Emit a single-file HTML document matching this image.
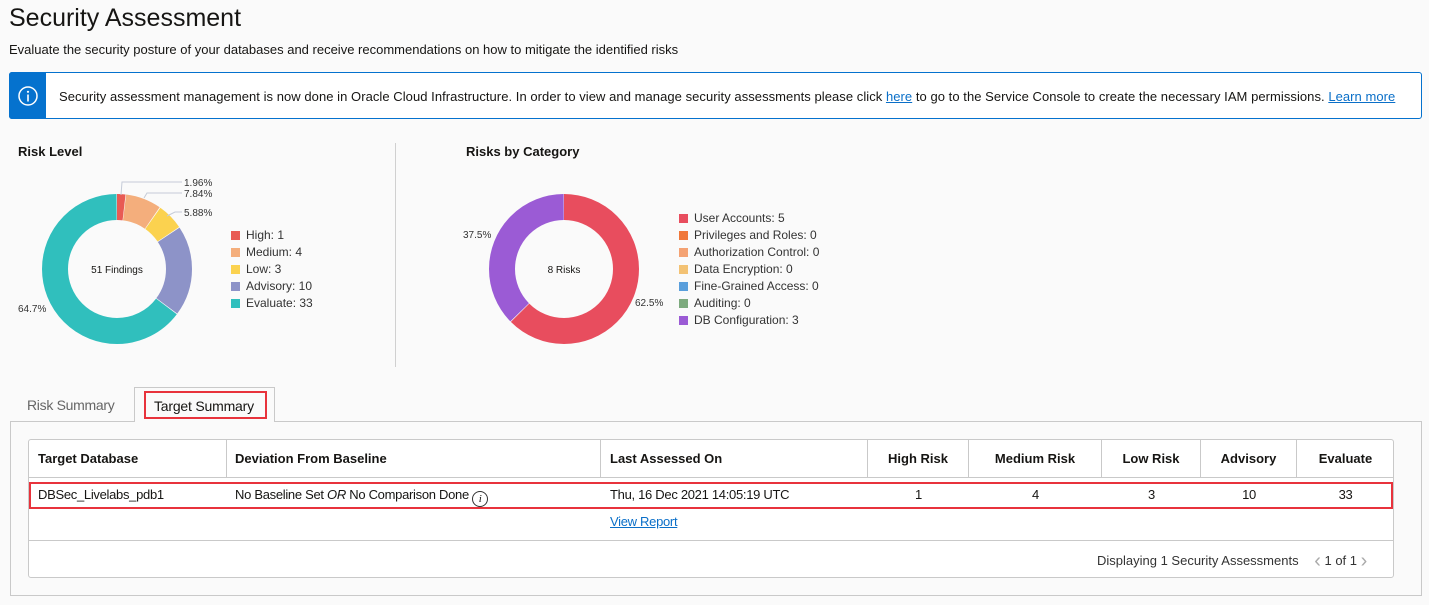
<!DOCTYPE html>
<html><head><meta charset="utf-8"><style>
*{box-sizing:border-box;margin:0;padding:0}
body{width:1429px;height:605px;background:#fafafa;font-family:"Liberation Sans",Arial,sans-serif;color:#161513;position:relative;overflow:hidden}
.a{position:absolute;white-space:nowrap}
a{color:#0a6fc8}
.tbl{position:absolute;left:28px;top:439px;width:1366px;height:139px;border:1px solid #c9c9c9;border-radius:3px;background:#fff}
.th{position:absolute;top:0;height:38px;line-height:37px;font-size:13px;font-weight:bold;border-right:1px solid #c9c9c9}
.td{position:absolute;top:47px;font-size:13px;letter-spacing:-0.3px}
</style></head><body>
<div class="a" style="left:9px;top:4px;font-size:25px;color:#161513">Security Assessment</div>
<div class="a" style="left:9px;top:42px;font-size:13px">Evaluate the security posture of your databases and receive recommendations on how to mitigate the identified risks</div>
<div class="a" style="left:9px;top:72px;width:1413px;height:47px;border:1px solid #0572ce;border-radius:3px;background:#fff"></div>
<div class="a" style="left:9px;top:72px;width:37px;height:47px;background:#0572ce;border-radius:3px 0 0 3px"></div>
<svg class="a" style="left:17px;top:85px" width="22" height="22" viewBox="0 0 22 22"><circle cx="11" cy="11" r="9" fill="none" stroke="#fff" stroke-width="1.5"/><rect x="10.2" y="9.5" width="1.6" height="7" fill="#fff"/><circle cx="11" cy="6.8" r="1.1" fill="#fff"/></svg>
<div class="a" style="left:59px;top:89px;font-size:13px;letter-spacing:0.05px">Security assessment management is now done in Oracle Cloud Infrastructure. In order to view and manage security assessments please click <a href="#">here</a> to go to the Service Console to create the necessary IAM permissions. <a href="#">Learn more</a></div>

<div class="a" style="left:18px;top:144px;font-size:13px;font-weight:bold">Risk Level</div>
<div class="a" style="left:466px;top:144px;font-size:13px;font-weight:bold">Risks by Category</div>
<div class="a" style="left:395px;top:143px;width:1px;height:224px;background:#d0d0d0"></div>

<svg class="a" style="left:0;top:160px" width="400" height="200">
<g transform="rotate(-90 117 109)" fill="none" stroke-width="26">
<circle cx="117" cy="109" r="62" stroke="#e85b54" stroke-dasharray="7.1 400" stroke-dashoffset="0"/>
<circle cx="117" cy="109" r="62" stroke="#f4ae7c" stroke-dasharray="29.9 400" stroke-dashoffset="-7.6"/>
<circle cx="117" cy="109" r="62" stroke="#fbd24f" stroke-dasharray="22.3 400" stroke-dashoffset="-38.2"/>
<circle cx="117" cy="109" r="62" stroke="#8d93c8" stroke-dasharray="75.8 400" stroke-dashoffset="-61.1"/>
<circle cx="117" cy="109" r="62" stroke="#30bfbd" stroke-dasharray="251.5 400" stroke-dashoffset="-137.5"/>
</g>
<polyline points="121,35 122,22 182,22" fill="none" stroke="#c5cbd8"/>
<polyline points="144,38 147,33 182,33" fill="none" stroke="#c5cbd8"/>
<polyline points="167,56 175,52 182,52" fill="none" stroke="#c5cbd8"/>
<text x="184" y="26" font-size="10" fill="#333">1.96%</text>
<text x="184" y="37" font-size="10" fill="#333">7.84%</text>
<text x="184" y="56" font-size="10" fill="#333">5.88%</text>
<text x="18" y="152" font-size="10" fill="#333">64.7%</text>
<text x="117" y="113" font-size="10" fill="#161513" text-anchor="middle">51 Findings</text>
</svg>
<svg class="a" style="left:228px;top:228px" width="100" height="90" font-size="12" fill="#333">
<rect x="3" y="3" width="9" height="9" fill="#e85b54"/><text x="18" y="11">High: 1</text>
<rect x="3" y="20" width="9" height="9" fill="#f4ae7c"/><text x="18" y="28">Medium: 4</text>
<rect x="3" y="37" width="9" height="9" fill="#fbd24f"/><text x="18" y="45">Low: 3</text>
<rect x="3" y="54" width="9" height="9" fill="#8d93c8"/><text x="18" y="62">Advisory: 10</text>
<rect x="3" y="71" width="9" height="9" fill="#30bfbd"/><text x="18" y="79">Evaluate: 33</text>
</svg>

<svg class="a" style="left:440px;top:160px" width="230" height="200">
<g transform="rotate(-90 124 109)" fill="none" stroke-width="26">
<circle cx="124" cy="109" r="62" stroke="#e84d5e" stroke-dasharray="243.5 400"/>
<circle cx="124" cy="109" r="62" stroke="#9b5bd5" stroke-dasharray="145 400" stroke-dashoffset="-244.1"/>
</g>
<text x="124" y="113" font-size="10" fill="#161513" text-anchor="middle">8 Risks</text>
<text x="23" y="78" font-size="10" fill="#333">37.5%</text>
<text x="195" y="146" font-size="10" fill="#333">62.5%</text>
</svg>
<svg class="a" style="left:676px;top:211px" width="160" height="120" font-size="12" fill="#333">
<rect x="3" y="3" width="9" height="9" fill="#e84d5e"/><text x="18" y="11">User Accounts: 5</text>
<rect x="3" y="20" width="9" height="9" fill="#f0773a"/><text x="18" y="28">Privileges and Roles: 0</text>
<rect x="3" y="37" width="9" height="9" fill="#f4a273"/><text x="18" y="45">Authorization Control: 0</text>
<rect x="3" y="54" width="9" height="9" fill="#f3c274"/><text x="18" y="62">Data Encryption: 0</text>
<rect x="3" y="71" width="9" height="9" fill="#5a9fdc"/><text x="18" y="79">Fine-Grained Access: 0</text>
<rect x="3" y="88" width="9" height="9" fill="#7daa7e"/><text x="18" y="96">Auditing: 0</text>
<rect x="3" y="105" width="9" height="9" fill="#9b5bd5"/><text x="18" y="113">DB Configuration: 3</text>
</svg>

<div class="a" style="left:10px;top:421px;width:1412px;height:175px;border:1px solid #c9c9c9;background:#fafafa"></div>
<div class="a" style="left:27px;top:397px;font-size:14px;color:#666;letter-spacing:-0.3px">Risk Summary</div>
<div class="a" style="left:134px;top:387px;width:141px;height:35px;border:1px solid #c9c9c9;border-bottom:none;background:#fafafa"></div>
<div class="a" style="left:144px;top:391px;width:123px;height:28px;border:2px solid #e8333c;font-size:14px;padding:5px 0 0 8px;letter-spacing:-0.2px">Target Summary</div>

<div class="tbl">
<div style="position:absolute;left:0;right:0;top:37px;border-top:1px solid #c9c9c9"></div>
<div style="position:absolute;left:0;right:0;top:100px;border-top:1px solid #c9c9c9"></div>
<div class="th" style="left:0;width:198px;padding-left:9px">Target Database</div>
<div class="th" style="left:198px;width:374px;padding-left:8px">Deviation From Baseline</div>
<div class="th" style="left:572px;width:267px;padding-left:9px">Last Assessed On</div>
<div class="th" style="left:839px;width:101px;text-align:center">High Risk</div>
<div class="th" style="left:940px;width:133px;text-align:center">Medium Risk</div>
<div class="th" style="left:1073px;width:99px;text-align:center">Low Risk</div>
<div class="th" style="left:1172px;width:96px;text-align:center">Advisory</div>
<div class="th" style="left:1268px;width:97px;text-align:center;border-right:none">Evaluate</div>
<div class="td" style="left:9px">DBSec_Livelabs_pdb1</div>
<div class="td" style="left:206px">No Baseline Set <i>OR</i> No Comparison Done <span style="display:inline-block;width:16px;height:16px;border:1px solid #333;border-radius:50%;font-size:11px;text-align:center;line-height:14px;font-style:italic;font-family:'Liberation Serif',serif;vertical-align:-3px">i</span></div>
<div class="td" style="left:581px">Thu, 16 Dec 2021 14:05:19 UTC</div>
<div class="td" style="left:839px;width:101px;text-align:center">1</div>
<div class="td" style="left:940px;width:133px;text-align:center">4</div>
<div class="td" style="left:1073px;width:99px;text-align:center">3</div>
<div class="td" style="left:1172px;width:96px;text-align:center">10</div>
<div class="td" style="left:1268px;width:97px;text-align:center">33</div>
<div class="td" style="left:581px;top:74px"><a href="#">View Report</a></div>
<div class="td" style="left:1068px;top:110px;color:#333;letter-spacing:0">Displaying 1 Security Assessments <span style="color:#aaa;font-size:20px;margin-left:12px;vertical-align:-2px">‹</span> 1 of 1 <span style="color:#aaa;font-size:20px;vertical-align:-2px">›</span></div>
</div>
<div class="a" style="left:29px;top:482px;width:1364px;height:27px;border:2px solid #e8333c"></div>
</body></html>
